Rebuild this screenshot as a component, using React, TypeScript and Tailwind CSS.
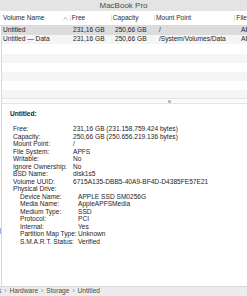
import React from "react";

const volumes = [
    { name: "Untitled", free: "231,16 GB", capacity: "250,66 GB", mount: "/", fs: "APFS" },
    { name: "Untitled — Data", free: "231,16 GB", capacity: "250,66 GB", mount: "/System/Volumes/Data", fs: "APFS" },
];

const details: { label: string; value: string; sub?: boolean }[] = [
    { label: "Free:", value: "231,16 GB (231.158.759.424 bytes)" },
    { label: "Capacity:", value: "250,66 GB (250.656.219.136 bytes)" },
    { label: "Mount Point:", value: "/" },
    { label: "File System:", value: "APFS" },
    { label: "Writable:", value: "No" },
    { label: "Ignore Ownership:", value: "No" },
    { label: "BSD Name:", value: "disk1s5" },
    { label: "Volume UUID:", value: "6715A135-DBB5-40A9-BF4D-D4385FE57E21" },
    { label: "Physical Drive:", value: "" },
    { label: "Device Name:", value: "APPLE SSD SM0256G", sub: true },
    { label: "Media Name:", value: "AppleAPFSMedia", sub: true },
    { label: "Medium Type:", value: "SSD", sub: true },
    { label: "Protocol:", value: "PCI", sub: true },
    { label: "Internal:", value: "Yes", sub: true },
    { label: "Partition Map Type:", value: "Unknown", sub: true },
    { label: "S.M.A.R.T. Status:", value: "Verified", sub: true },
];

const stripes = [0, 1, 2, 3, 4, 5, 6, 7];

export default function App() {
    return (
        <div
            className="w-[247px] h-[296px] overflow-hidden bg-white flex flex-col text-[#1e1e1e]"
            style={{ fontFamily: '"Liberation Sans", Arial, sans-serif' }}
        >
            {/* title bar */}
            <div className="h-[11px] shrink-0 bg-[#e4e4e4] flex items-center justify-center text-[8px] leading-none text-[#4a4a4a]">
                MacBook Pro
            </div>

            {/* column headers */}
            <div className="h-[15px] shrink-0 flex items-center border-b border-[#dadada] text-[6.6px] leading-none text-[#2a2a2a] whitespace-nowrap">
                <div className="w-[71px] pl-[3px] flex items-center justify-between pr-[2px]">
                    <span>Volume Name</span>
                    <svg width="5" height="3" viewBox="0 0 5 3" className="text-[#8a8a8a]">
                        <path d="M0.5 2.5 L2.5 0.5 L4.5 2.5" fill="none" stroke="currentColor" strokeWidth="0.7" />
                    </svg>
                </div>
                <div className="w-[42px] pl-[1px] border-l border-[#e0e0e0]">Free</div>
                <div className="w-[44px] pl-[1px] border-l border-[#e0e0e0]">Capacity</div>
                <div className="w-[82px] pl-[1px] border-l border-[#e0e0e0]">Mount Point</div>
                <div className="flex-1 pl-[1px] border-l border-[#e0e0e0]">File</div>
            </div>

            <div className="flex-1 flex min-h-0">
                {/* sidebar remnant */}
                <div className="w-[1px] flex flex-col">
                    <div className="h-[202px]" />
                    <div className="h-[6px] bg-[#9db8e6]" />
                </div>

                <div className="flex-1 flex flex-col border-l border-[#d8d8d8] min-w-0">
                    {/* table rows */}
                    <div className="h-[72px] shrink-0 overflow-hidden flex flex-col">
                        {stripes.map((i) => {
                            const v = volumes[i];
                            const bg = i === 0 ? "bg-[#dcdcdc]" : i % 2 === 1 ? "bg-[#f4f5f5]" : "bg-white";
                            return (
                                <div key={i} className={`h-[9.2px] shrink-0 flex items-center text-[6.6px] leading-none whitespace-nowrap ${bg}`}>
                                    {v && (
                                        <>
                                            <div className="w-[70px] pl-[1px]">{v.name}</div>
                                            <div className="w-[42px] pl-[1px]">{v.free}</div>
                                            <div className="w-[44px] pl-[1px]">{v.capacity}</div>
                                            <div className="w-[82px] pl-[1px]">{v.mount}</div>
                                            <div className="flex-1 pl-[1px] overflow-hidden">{v.fs}</div>
                                        </>
                                    )}
                                </div>
                            );
                        })}
                    </div>

                    {/* splitter */}
                    <div className="h-[6px] shrink-0 border-t border-b border-[#e4e4e4] bg-[#fbfbfb] flex items-center pl-[166px]">
                        <div className="w-[3px] h-[3px] rounded-[1px] bg-[#b9b9b9]" />
                    </div>

                    {/* detail */}
                    <div className="flex-1 pt-[6px] text-[6.6px] leading-[7.5px] whitespace-nowrap">
                        <div className="pl-[8px] font-bold mb-[7.5px]">Untitled:</div>
                        {details.map((d) => (
                            <div key={d.label} className="flex">
                                <div className={d.sub ? "w-[76px] pl-[18px]" : "w-[71px] pl-[11px]"}>{d.label}</div>
                                <div>{d.value}</div>
                            </div>
                        ))}
                    </div>
                </div>
            </div>

            {/* path bar */}
            <div className="h-[10px] shrink-0 bg-[#ececec] border-t border-[#d6d6d6] flex items-center text-[6.6px] leading-none text-[#4a4a4a] whitespace-nowrap">
                <span className="ml-[-2px]">s</span>
                <span className="mx-[3px] text-[#8a8a8a]">›</span>
                <span>Hardware</span>
                <span className="mx-[3px] text-[#8a8a8a]">›</span>
                <span>Storage</span>
                <span className="mx-[3px] text-[#8a8a8a]">›</span>
                <span>Untitled</span>
            </div>
        </div>
    );
}
